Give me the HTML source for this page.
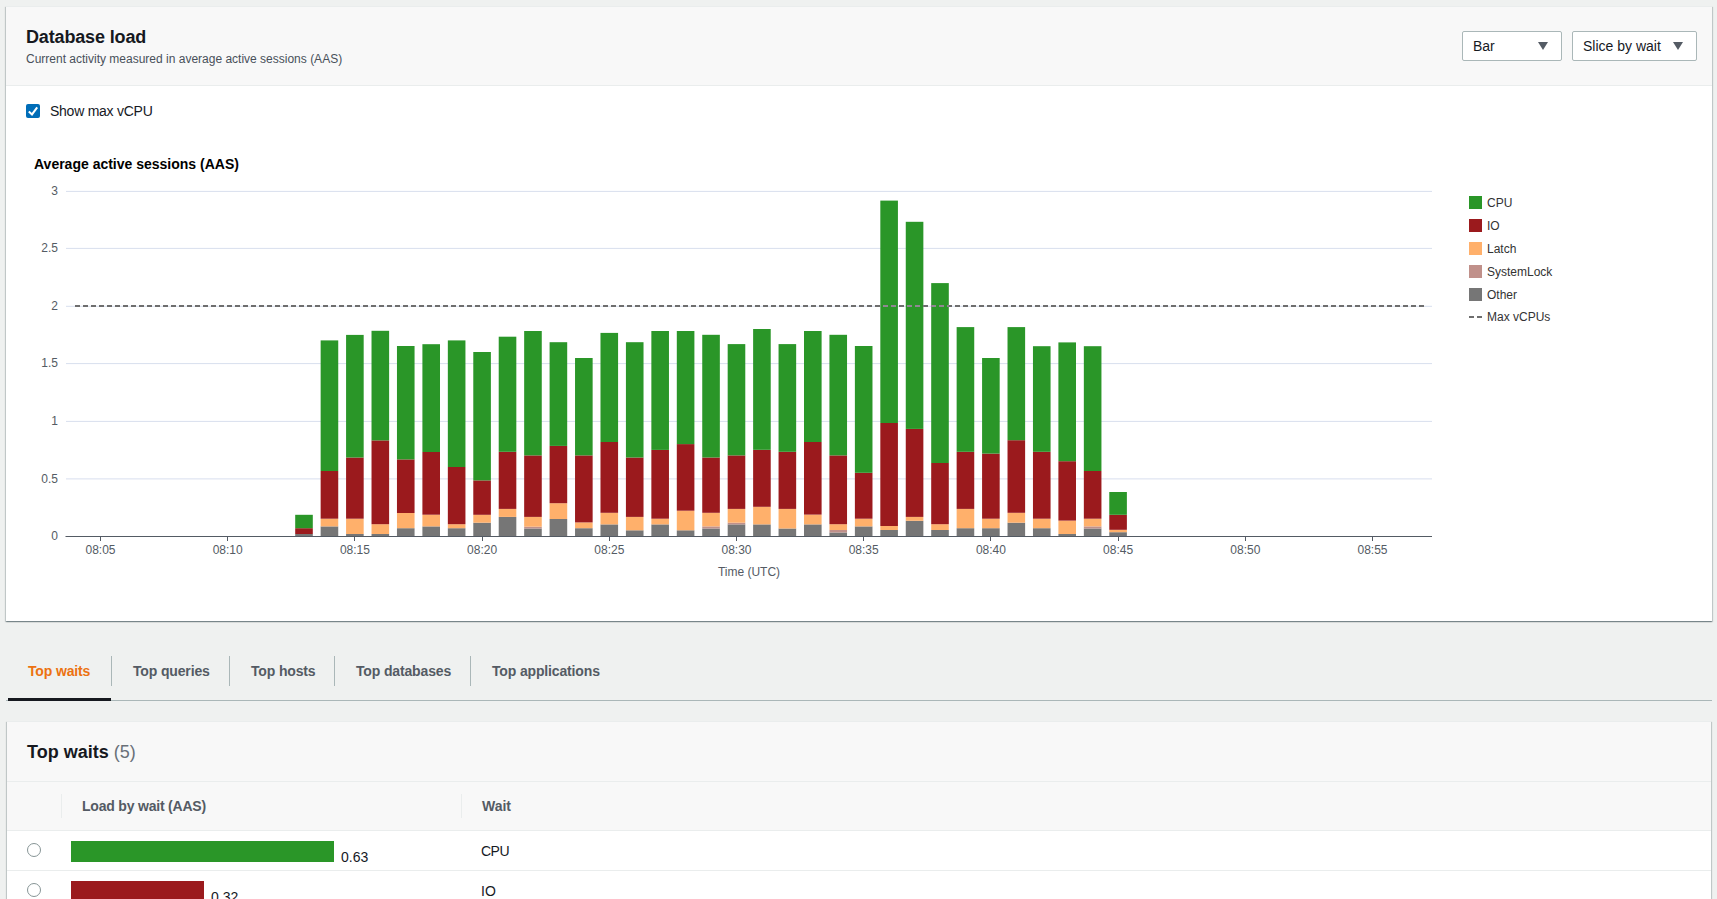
<!DOCTYPE html>
<html><head><meta charset="utf-8">
<style>
*{box-sizing:border-box;}
html,body{margin:0;padding:0;}
body{width:1717px;height:899px;overflow:hidden;background:#eff1f0;position:relative;font-family:"Liberation Sans",sans-serif;color:#16191f;}
.abs{position:absolute;white-space:nowrap;}
.card{position:absolute;background:#fff;box-shadow:0 1px 1px 0 rgba(0,28,36,.3),1px 1px 1px 0 rgba(0,28,36,.15),-1px 1px 1px 0 rgba(0,28,36,.15);}
.hdr{position:absolute;left:0;top:0;right:0;background:#f8f8f8;border-bottom:1px solid #eaeded;}
svg text{font-family:"Liberation Sans",sans-serif;}
.tl{font-size:12px;fill:#545b64;}
.tt{font-size:14px;font-weight:bold;fill:#000;}
.lg{font-size:12px;fill:#333;}
.sel{position:absolute;background:#fff;border:1px solid #aab7b8;border-radius:2px;height:30px;}
.sel span{position:absolute;left:10px;top:5px;font-size:14px;line-height:18px;color:#16191f;}
.sel i{position:absolute;top:10px;width:0;height:0;border-left:5px solid transparent;border-right:5px solid transparent;border-top:8px solid #545b64;}
.tab{position:absolute;top:662px;font-size:14px;font-weight:bold;line-height:18px;color:#545b64;letter-spacing:-0.15px;}
.tsep{position:absolute;top:656px;width:1px;height:30px;background:#aab7b8;}
</style></head><body>
<div class="card" style="left:6px;top:6px;width:1706px;height:615px;border-top:1px solid #eaeded;">
  <div class="hdr" style="height:79px;"></div>
</div>
<div class="abs" style="left:26px;top:26px;font-size:18px;font-weight:bold;line-height:22px;letter-spacing:-0.15px;">Database load</div>
<div class="abs" style="left:26px;top:52px;font-size:12px;line-height:14px;color:#48505a;">Current activity measured in average active sessions (AAS)</div>
<div class="sel" style="left:1462px;top:31px;width:100px;"><span>Bar</span><i style="left:75px"></i></div>
<div class="sel" style="left:1572px;top:31px;width:125px;"><span>Slice by wait</span><i style="left:100px"></i></div>
<div class="abs" style="left:26px;top:104px;width:14px;height:14px;background:#006db8;border-radius:2px;">
  <svg width="14" height="14" viewBox="0 0 14 14" style="position:absolute;left:0;top:0"><path d="M2.8 7.4 L6 10.4 L11.2 3.4" fill="none" stroke="#fff" stroke-width="2"/></svg>
</div>
<div class="abs" style="left:50px;top:102px;font-size:14px;line-height:18px;letter-spacing:-0.25px;">Show max vCPU</div>
<svg width="1717" height="899" style="position:absolute;left:0;top:0;">
<line x1="66" y1="478.9" x2="1432" y2="478.9" stroke="#d8dfee" stroke-width="1"/>
<line x1="66" y1="421.4" x2="1432" y2="421.4" stroke="#d8dfee" stroke-width="1"/>
<line x1="66" y1="363.6" x2="1432" y2="363.6" stroke="#d8dfee" stroke-width="1"/>
<line x1="66" y1="306.3" x2="1432" y2="306.3" stroke="#d8dfee" stroke-width="1"/>
<line x1="66" y1="248.4" x2="1432" y2="248.4" stroke="#d8dfee" stroke-width="1"/>
<line x1="66" y1="191.4" x2="1432" y2="191.4" stroke="#d8dfee" stroke-width="1"/>
<text x="58" y="539.9" text-anchor="end" class="tl">0</text>
<text x="58" y="482.5" text-anchor="end" class="tl">0.5</text>
<text x="58" y="425.0" text-anchor="end" class="tl">1</text>
<text x="58" y="367.2" text-anchor="end" class="tl">1.5</text>
<text x="58" y="309.9" text-anchor="end" class="tl">2</text>
<text x="58" y="252.0" text-anchor="end" class="tl">2.5</text>
<text x="58" y="195.0" text-anchor="end" class="tl">3</text>
<rect x="295.20" y="534.00" width="17.6" height="2.00" fill="#767676"/>
<rect x="295.20" y="528.20" width="17.6" height="5.80" fill="#9b1a1d"/>
<rect x="295.20" y="514.80" width="17.6" height="13.40" fill="#2a9628"/>
<rect x="320.64" y="526.40" width="17.6" height="9.60" fill="#767676"/>
<rect x="320.64" y="518.70" width="17.6" height="7.70" fill="#ffb06b"/>
<rect x="320.64" y="471.00" width="17.6" height="47.70" fill="#9b1a1d"/>
<rect x="320.64" y="340.40" width="17.6" height="130.60" fill="#2a9628"/>
<rect x="346.08" y="534.00" width="17.6" height="2.00" fill="#767676"/>
<rect x="346.08" y="518.70" width="17.6" height="15.30" fill="#ffb06b"/>
<rect x="346.08" y="457.50" width="17.6" height="61.20" fill="#9b1a1d"/>
<rect x="346.08" y="334.90" width="17.6" height="122.60" fill="#2a9628"/>
<rect x="371.52" y="534.00" width="17.6" height="2.00" fill="#767676"/>
<rect x="371.52" y="524.20" width="17.6" height="9.80" fill="#ffb06b"/>
<rect x="371.52" y="440.40" width="17.6" height="83.80" fill="#9b1a1d"/>
<rect x="371.52" y="330.80" width="17.6" height="109.60" fill="#2a9628"/>
<rect x="396.96" y="528.20" width="17.6" height="7.80" fill="#767676"/>
<rect x="396.96" y="513.00" width="17.6" height="15.20" fill="#ffb06b"/>
<rect x="396.96" y="459.40" width="17.6" height="53.60" fill="#9b1a1d"/>
<rect x="396.96" y="346.00" width="17.6" height="113.40" fill="#2a9628"/>
<rect x="422.40" y="526.40" width="17.6" height="9.60" fill="#767676"/>
<rect x="422.40" y="514.70" width="17.6" height="11.70" fill="#ffb06b"/>
<rect x="422.40" y="452.00" width="17.6" height="62.70" fill="#9b1a1d"/>
<rect x="422.40" y="344.20" width="17.6" height="107.80" fill="#2a9628"/>
<rect x="447.84" y="528.20" width="17.6" height="7.80" fill="#767676"/>
<rect x="447.84" y="524.20" width="17.6" height="4.00" fill="#ffb06b"/>
<rect x="447.84" y="467.00" width="17.6" height="57.20" fill="#9b1a1d"/>
<rect x="447.84" y="340.40" width="17.6" height="126.60" fill="#2a9628"/>
<rect x="473.28" y="522.70" width="17.6" height="13.30" fill="#767676"/>
<rect x="473.28" y="514.80" width="17.6" height="7.90" fill="#ffb06b"/>
<rect x="473.28" y="480.40" width="17.6" height="34.40" fill="#9b1a1d"/>
<rect x="473.28" y="352.00" width="17.6" height="128.40" fill="#2a9628"/>
<rect x="498.72" y="516.90" width="17.6" height="19.10" fill="#767676"/>
<rect x="498.72" y="508.90" width="17.6" height="8.00" fill="#ffb06b"/>
<rect x="498.72" y="451.80" width="17.6" height="57.10" fill="#9b1a1d"/>
<rect x="498.72" y="336.70" width="17.6" height="115.10" fill="#2a9628"/>
<rect x="524.16" y="528.50" width="17.6" height="7.50" fill="#767676"/>
<rect x="524.16" y="526.70" width="17.6" height="1.80" fill="#c0908a"/>
<rect x="524.16" y="516.90" width="17.6" height="9.80" fill="#ffb06b"/>
<rect x="524.16" y="455.40" width="17.6" height="61.50" fill="#9b1a1d"/>
<rect x="524.16" y="331.00" width="17.6" height="124.40" fill="#2a9628"/>
<rect x="549.60" y="519.00" width="17.6" height="17.00" fill="#767676"/>
<rect x="549.60" y="503.20" width="17.6" height="15.80" fill="#ffb06b"/>
<rect x="549.60" y="445.90" width="17.6" height="57.30" fill="#9b1a1d"/>
<rect x="549.60" y="342.20" width="17.6" height="103.70" fill="#2a9628"/>
<rect x="575.04" y="528.20" width="17.6" height="7.80" fill="#767676"/>
<rect x="575.04" y="522.40" width="17.6" height="5.80" fill="#ffb06b"/>
<rect x="575.04" y="455.40" width="17.6" height="67.00" fill="#9b1a1d"/>
<rect x="575.04" y="358.00" width="17.6" height="97.40" fill="#2a9628"/>
<rect x="600.48" y="524.40" width="17.6" height="11.60" fill="#767676"/>
<rect x="600.48" y="512.80" width="17.6" height="11.60" fill="#ffb06b"/>
<rect x="600.48" y="442.00" width="17.6" height="70.80" fill="#9b1a1d"/>
<rect x="600.48" y="332.90" width="17.6" height="109.10" fill="#2a9628"/>
<rect x="625.92" y="530.30" width="17.6" height="5.70" fill="#767676"/>
<rect x="625.92" y="516.90" width="17.6" height="13.40" fill="#ffb06b"/>
<rect x="625.92" y="457.50" width="17.6" height="59.40" fill="#9b1a1d"/>
<rect x="625.92" y="342.20" width="17.6" height="115.30" fill="#2a9628"/>
<rect x="651.36" y="524.40" width="17.6" height="11.60" fill="#767676"/>
<rect x="651.36" y="518.70" width="17.6" height="5.70" fill="#ffb06b"/>
<rect x="651.36" y="449.90" width="17.6" height="68.80" fill="#9b1a1d"/>
<rect x="651.36" y="331.00" width="17.6" height="118.90" fill="#2a9628"/>
<rect x="676.80" y="530.30" width="17.6" height="5.70" fill="#767676"/>
<rect x="676.80" y="510.70" width="17.6" height="19.60" fill="#ffb06b"/>
<rect x="676.80" y="444.10" width="17.6" height="66.60" fill="#9b1a1d"/>
<rect x="676.80" y="331.00" width="17.6" height="113.10" fill="#2a9628"/>
<rect x="702.24" y="528.50" width="17.6" height="7.50" fill="#767676"/>
<rect x="702.24" y="526.40" width="17.6" height="2.10" fill="#c0908a"/>
<rect x="702.24" y="512.80" width="17.6" height="13.60" fill="#ffb06b"/>
<rect x="702.24" y="457.50" width="17.6" height="55.30" fill="#9b1a1d"/>
<rect x="702.24" y="334.80" width="17.6" height="122.70" fill="#2a9628"/>
<rect x="727.68" y="524.40" width="17.6" height="11.60" fill="#767676"/>
<rect x="727.68" y="522.70" width="17.6" height="1.70" fill="#c0908a"/>
<rect x="727.68" y="508.90" width="17.6" height="13.80" fill="#ffb06b"/>
<rect x="727.68" y="455.40" width="17.6" height="53.50" fill="#9b1a1d"/>
<rect x="727.68" y="344.10" width="17.6" height="111.30" fill="#2a9628"/>
<rect x="753.12" y="524.40" width="17.6" height="11.60" fill="#767676"/>
<rect x="753.12" y="506.80" width="17.6" height="17.60" fill="#ffb06b"/>
<rect x="753.12" y="449.80" width="17.6" height="57.00" fill="#9b1a1d"/>
<rect x="753.12" y="329.00" width="17.6" height="120.80" fill="#2a9628"/>
<rect x="778.56" y="528.50" width="17.6" height="7.50" fill="#767676"/>
<rect x="778.56" y="508.90" width="17.6" height="19.60" fill="#ffb06b"/>
<rect x="778.56" y="451.80" width="17.6" height="57.10" fill="#9b1a1d"/>
<rect x="778.56" y="344.10" width="17.6" height="107.70" fill="#2a9628"/>
<rect x="804.00" y="524.40" width="17.6" height="11.60" fill="#767676"/>
<rect x="804.00" y="514.60" width="17.6" height="9.80" fill="#ffb06b"/>
<rect x="804.00" y="442.00" width="17.6" height="72.60" fill="#9b1a1d"/>
<rect x="804.00" y="331.00" width="17.6" height="111.00" fill="#2a9628"/>
<rect x="829.44" y="532.50" width="17.6" height="3.50" fill="#767676"/>
<rect x="829.44" y="530.00" width="17.6" height="2.50" fill="#c0908a"/>
<rect x="829.44" y="524.20" width="17.6" height="5.80" fill="#ffb06b"/>
<rect x="829.44" y="455.40" width="17.6" height="68.80" fill="#9b1a1d"/>
<rect x="829.44" y="334.80" width="17.6" height="120.60" fill="#2a9628"/>
<rect x="854.88" y="526.40" width="17.6" height="9.60" fill="#767676"/>
<rect x="854.88" y="518.70" width="17.6" height="7.70" fill="#ffb06b"/>
<rect x="854.88" y="472.80" width="17.6" height="45.90" fill="#9b1a1d"/>
<rect x="854.88" y="346.00" width="17.6" height="126.80" fill="#2a9628"/>
<rect x="880.32" y="530.00" width="17.6" height="6.00" fill="#767676"/>
<rect x="880.32" y="526.00" width="17.6" height="4.00" fill="#ffb06b"/>
<rect x="880.32" y="423.00" width="17.6" height="103.00" fill="#9b1a1d"/>
<rect x="880.32" y="200.60" width="17.6" height="222.40" fill="#2a9628"/>
<rect x="905.76" y="520.80" width="17.6" height="15.20" fill="#767676"/>
<rect x="905.76" y="516.90" width="17.6" height="3.90" fill="#ffb06b"/>
<rect x="905.76" y="428.90" width="17.6" height="88.00" fill="#9b1a1d"/>
<rect x="905.76" y="221.80" width="17.6" height="207.10" fill="#2a9628"/>
<rect x="931.20" y="530.00" width="17.6" height="6.00" fill="#767676"/>
<rect x="931.20" y="524.20" width="17.6" height="5.80" fill="#ffb06b"/>
<rect x="931.20" y="463.00" width="17.6" height="61.20" fill="#9b1a1d"/>
<rect x="931.20" y="283.10" width="17.6" height="179.90" fill="#2a9628"/>
<rect x="956.64" y="528.20" width="17.6" height="7.80" fill="#767676"/>
<rect x="956.64" y="508.90" width="17.6" height="19.30" fill="#ffb06b"/>
<rect x="956.64" y="451.80" width="17.6" height="57.10" fill="#9b1a1d"/>
<rect x="956.64" y="327.10" width="17.6" height="124.70" fill="#2a9628"/>
<rect x="982.08" y="528.20" width="17.6" height="7.80" fill="#767676"/>
<rect x="982.08" y="518.70" width="17.6" height="9.50" fill="#ffb06b"/>
<rect x="982.08" y="453.60" width="17.6" height="65.10" fill="#9b1a1d"/>
<rect x="982.08" y="358.00" width="17.6" height="95.60" fill="#2a9628"/>
<rect x="1007.52" y="522.70" width="17.6" height="13.30" fill="#767676"/>
<rect x="1007.52" y="512.80" width="17.6" height="9.90" fill="#ffb06b"/>
<rect x="1007.52" y="440.20" width="17.6" height="72.60" fill="#9b1a1d"/>
<rect x="1007.52" y="327.10" width="17.6" height="113.10" fill="#2a9628"/>
<rect x="1032.96" y="528.20" width="17.6" height="7.80" fill="#767676"/>
<rect x="1032.96" y="518.70" width="17.6" height="9.50" fill="#ffb06b"/>
<rect x="1032.96" y="451.80" width="17.6" height="66.90" fill="#9b1a1d"/>
<rect x="1032.96" y="346.20" width="17.6" height="105.60" fill="#2a9628"/>
<rect x="1058.40" y="534.00" width="17.6" height="2.00" fill="#767676"/>
<rect x="1058.40" y="520.60" width="17.6" height="13.40" fill="#ffb06b"/>
<rect x="1058.40" y="461.20" width="17.6" height="59.40" fill="#9b1a1d"/>
<rect x="1058.40" y="342.40" width="17.6" height="118.80" fill="#2a9628"/>
<rect x="1083.84" y="528.50" width="17.6" height="7.50" fill="#767676"/>
<rect x="1083.84" y="526.40" width="17.6" height="2.10" fill="#c0908a"/>
<rect x="1083.84" y="518.70" width="17.6" height="7.70" fill="#ffb06b"/>
<rect x="1083.84" y="471.00" width="17.6" height="47.70" fill="#9b1a1d"/>
<rect x="1083.84" y="346.20" width="17.6" height="124.80" fill="#2a9628"/>
<rect x="1109.28" y="532.20" width="17.6" height="3.80" fill="#767676"/>
<rect x="1109.28" y="529.80" width="17.6" height="2.40" fill="#ffb06b"/>
<rect x="1109.28" y="514.80" width="17.6" height="15.00" fill="#9b1a1d"/>
<rect x="1109.28" y="492.00" width="17.6" height="22.80" fill="#2a9628"/>
<line x1="75" y1="306" x2="1424" y2="306" stroke="#6e6e6e" stroke-width="2" stroke-dasharray="5 3"/>
<clipPath id="bc"><rect x="880.32" y="300" width="17.6" height="12"/><rect x="905.76" y="300" width="17.6" height="12"/><rect x="931.20" y="300" width="17.6" height="12"/></clipPath>
<line x1="75" y1="306" x2="1424" y2="306" stroke="#908892" stroke-width="2" stroke-dasharray="5 3" clip-path="url(#bc)"/>
<line x1="65.5" y1="536.5" x2="1432" y2="536.5" stroke="#545b64" stroke-width="1"/>
<line x1="100.5" y1="537" x2="100.5" y2="541" stroke="#545b64" stroke-width="1"/>
<text x="100.5" y="554" text-anchor="middle" class="tl">08:05</text>
<line x1="227.5" y1="537" x2="227.5" y2="541" stroke="#545b64" stroke-width="1"/>
<text x="227.7" y="554" text-anchor="middle" class="tl">08:10</text>
<line x1="354.5" y1="537" x2="354.5" y2="541" stroke="#545b64" stroke-width="1"/>
<text x="354.9" y="554" text-anchor="middle" class="tl">08:15</text>
<line x1="482.5" y1="537" x2="482.5" y2="541" stroke="#545b64" stroke-width="1"/>
<text x="482.1" y="554" text-anchor="middle" class="tl">08:20</text>
<line x1="609.5" y1="537" x2="609.5" y2="541" stroke="#545b64" stroke-width="1"/>
<text x="609.3" y="554" text-anchor="middle" class="tl">08:25</text>
<line x1="736.5" y1="537" x2="736.5" y2="541" stroke="#545b64" stroke-width="1"/>
<text x="736.5" y="554" text-anchor="middle" class="tl">08:30</text>
<line x1="863.5" y1="537" x2="863.5" y2="541" stroke="#545b64" stroke-width="1"/>
<text x="863.7" y="554" text-anchor="middle" class="tl">08:35</text>
<line x1="990.5" y1="537" x2="990.5" y2="541" stroke="#545b64" stroke-width="1"/>
<text x="990.9" y="554" text-anchor="middle" class="tl">08:40</text>
<line x1="1118.5" y1="537" x2="1118.5" y2="541" stroke="#545b64" stroke-width="1"/>
<text x="1118.1" y="554" text-anchor="middle" class="tl">08:45</text>
<line x1="1245.5" y1="537" x2="1245.5" y2="541" stroke="#545b64" stroke-width="1"/>
<text x="1245.3" y="554" text-anchor="middle" class="tl">08:50</text>
<line x1="1372.5" y1="537" x2="1372.5" y2="541" stroke="#545b64" stroke-width="1"/>
<text x="1372.5" y="554" text-anchor="middle" class="tl">08:55</text>
<text x="749" y="576" text-anchor="middle" class="tl">Time (UTC)</text>
<text x="34" y="168.5" class="tt">Average active sessions (AAS)</text>
<rect x="1469" y="196" width="13" height="13" fill="#2a9628"/>
<text x="1487" y="206.5" class="lg">CPU</text>
<rect x="1469" y="219" width="13" height="13" fill="#9b1a1d"/>
<text x="1487" y="229.5" class="lg">IO</text>
<rect x="1469" y="242" width="13" height="13" fill="#ffb06b"/>
<text x="1487" y="252.5" class="lg">Latch</text>
<rect x="1469" y="265" width="13" height="13" fill="#c0908a"/>
<text x="1487" y="275.5" class="lg">SystemLock</text>
<rect x="1469" y="288" width="13" height="13" fill="#767676"/>
<text x="1487" y="298.5" class="lg">Other</text>
<line x1="1469" y1="317" x2="1482" y2="317" stroke="#6e6e6e" stroke-width="2" stroke-dasharray="5 3"/>
<text x="1487" y="321" class="lg">Max vCPUs</text>
</svg>
<!-- tabs -->
<div class="tab" style="left:28px;color:#ec7211;">Top waits</div>
<div class="tsep" style="left:111px"></div>
<div class="tab" style="left:133px;">Top queries</div>
<div class="tsep" style="left:229px"></div>
<div class="tab" style="left:251px;">Top hosts</div>
<div class="tsep" style="left:334px"></div>
<div class="tab" style="left:356px;">Top databases</div>
<div class="tsep" style="left:470px"></div>
<div class="tab" style="left:492px;">Top applications</div>
<div class="abs" style="left:6px;top:700px;width:1706px;height:1px;background:#aab7b8;"></div>
<div class="abs" style="left:8px;top:698px;width:103px;height:3px;background:#16191f;"></div>
<!-- table card -->
<div class="card" style="left:7px;top:721px;width:1704px;height:300px;border-top:1px solid #eaeded;">
  <div class="hdr" style="height:60px;"></div>
  <div style="position:absolute;left:0;top:60px;right:0;height:49px;background:#f8f8f8;border-bottom:1px solid #eaeded;"></div>
  <div style="position:absolute;left:0;top:148px;right:0;height:1px;background:#eaeded;"></div>
</div>
<div class="abs" style="left:27px;top:741px;font-size:18px;font-weight:bold;line-height:22px;">Top waits <span style="font-weight:normal;color:#687078;">(5)</span></div>
<div class="abs" style="left:61px;top:794px;width:1px;height:24px;background:#eaeded;"></div>
<div class="abs" style="left:461px;top:794px;width:1px;height:24px;background:#eaeded;"></div>
<div class="abs" style="left:82px;top:797px;font-size:14px;font-weight:bold;line-height:18px;color:#545b64;letter-spacing:-0.2px;">Load by wait (AAS)</div>
<div class="abs" style="left:482px;top:797px;font-size:14px;font-weight:bold;line-height:18px;color:#545b64;">Wait</div>
<div class="abs" style="left:27px;top:843px;width:14px;height:14px;border:1.5px solid #879596;border-radius:50%;background:#fff;"></div>
<div class="abs" style="left:71px;top:841px;width:263px;height:21px;background:#2a9628;"></div>
<div class="abs" style="left:341px;top:849px;font-size:14px;line-height:16px;">0.63</div>
<div class="abs" style="left:481px;top:843px;font-size:14px;line-height:16px;letter-spacing:-0.5px;">CPU</div>
<div class="abs" style="left:27px;top:883px;width:14px;height:14px;border:1.5px solid #879596;border-radius:50%;background:#fff;"></div>
<div class="abs" style="left:71px;top:881px;width:133px;height:21px;background:#9b1a1d;"></div>
<div class="abs" style="left:211px;top:889px;font-size:14px;line-height:16px;">0.32</div>
<div class="abs" style="left:481px;top:883px;font-size:14px;line-height:16px;">IO</div>
</body></html>
